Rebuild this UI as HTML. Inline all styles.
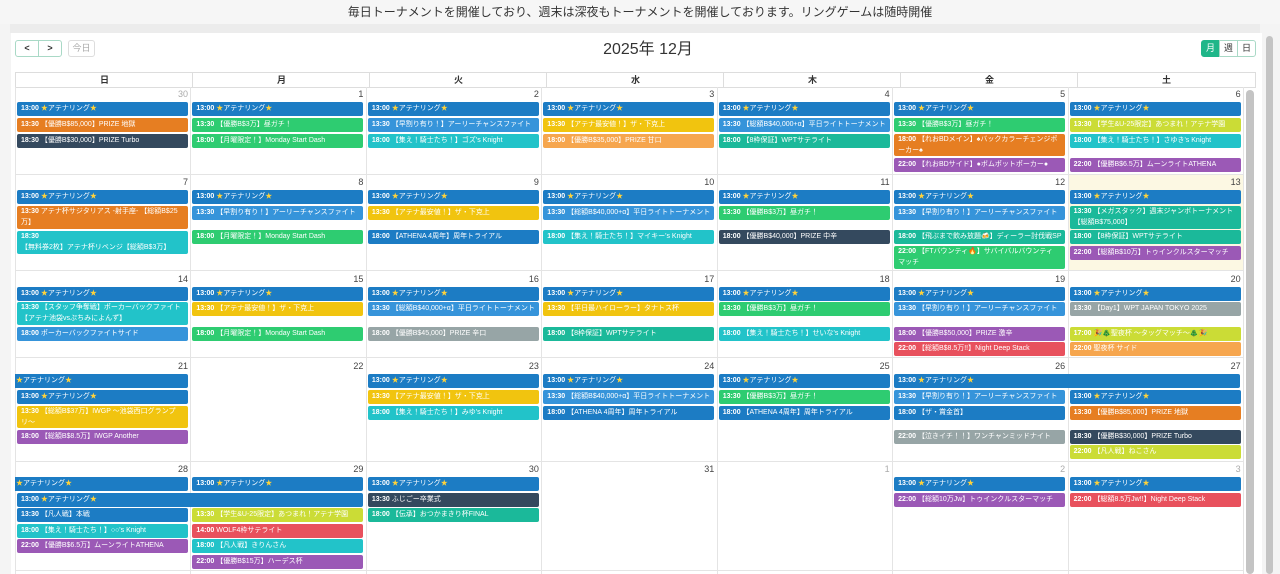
<!DOCTYPE html>
<html><head><meta charset="utf-8">
<style>
*{margin:0;padding:0;box-sizing:border-box}
body{width:1280px;height:574px;overflow:hidden;background:#f4f4f4;font-family:"Liberation Sans","Noto Sans CJK JP",sans-serif;position:relative;color:#333}
.top{position:absolute;left:0;top:0;width:1280px;height:24px;text-align:center;font-size:12px;line-height:24px;color:#333;background:#f6f6f6}
.band{position:absolute;left:10px;top:24px;width:1250px;height:9px;background:#ececec}
.wrap{position:absolute;left:11px;top:33px;width:1251px;height:541px;background:#fff}
.btn{position:absolute;top:40px;height:17px;border:1px solid #a9d9c6;border-radius:3px;background:#fff;font-size:9px;text-align:center;line-height:15px;color:#333}
.title{position:absolute;left:548px;top:39px;width:200px;text-align:center;font-size:16px;line-height:22px;color:#333}
.hd{position:absolute;top:72px;height:16px;border:1px solid #ddd;border-right:none;font-size:9px;font-weight:bold;text-align:center;line-height:14px}
.vl{position:absolute;top:87px;width:1px;height:487px;background:#e4e4e4}
.hl{position:absolute;left:15px;width:1228px;height:1px;background:#e4e4e4}
.dn{position:absolute;width:171px;text-align:right;font-size:9px;line-height:12px;color:#444}
.dn.g{color:#aaa}
.e{position:absolute;width:171px;height:14px;border-radius:2px;color:#fff;font-size:7px;line-height:14px;padding-left:4px;white-space:nowrap;overflow:hidden}
.e.t{height:23px;line-height:10.5px;white-space:normal;padding-top:1px;padding-right:6px}
.e b{font-weight:bold}
.s{color:#ffd23a}
.c0{left:17px}.c1{left:192.4px}.c2{left:367.9px}.c3{left:543.3px}.c4{left:718.7px}.c5{left:894.1px}.c6{left:1069.6px}
.B{background:#1c7cc4}.L{background:#3694da}.O{background:#e67e22}.N{background:#34495e}.G{background:#2ecc71}.C{background:#22c3c9}.Y{background:#f1c40f}.LO{background:#f6a64e}.T{background:#1bb99a}.P{background:#9b59b6}.LI{background:#cbdc36}.GR{background:#97a5a6}.R{background:#e8515d}
.sb{position:absolute;width:7px;border-radius:4px;background:#c4c4c4}
</style></head><body>
<div class="top">毎日トーナメントを開催しており、週末は深夜もトーナメントを開催しております。リングゲームは随時開催</div>
<div class="band"></div>
<div class="wrap"></div>
<div class="btn" style="left:15px;width:24px;font-weight:bold;border-radius:3px 0 0 3px">&lt;</div>
<div class="btn" style="left:38px;width:24px;font-weight:bold;border-radius:0 3px 3px 0">&gt;</div>
<div class="btn" style="left:68px;width:27px;color:#aaa;border-color:#ddd">今日</div>
<div class="title">2025年 12月</div>
<div class="btn" style="left:1201px;width:19px;background:#1fb689;border-color:#1fb689;color:#fff;border-radius:3px 0 0 3px">月</div>
<div class="btn" style="left:1219px;width:19px;border-radius:0">週</div>
<div class="btn" style="left:1237px;width:19px;border-radius:0 3px 3px 0">日</div>
<div class="sb" style="left:1266px;top:36px;height:538px"></div>
<div class="sb" style="left:1246px;top:90px;height:484px;width:8px"></div>

<div class="hd" style="left:15px;width:178px">日</div>
<div class="hd" style="left:192px;width:178px">月</div>
<div class="hd" style="left:369px;width:178px">火</div>
<div class="hd" style="left:546px;width:178px">水</div>
<div class="hd" style="left:723px;width:178px">木</div>
<div class="hd" style="left:900px;width:178px">金</div>
<div class="hd" style="left:1077px;width:179px;border-right:1px solid #ddd">土</div>

<div style="position:absolute;left:1068px;top:175px;width:175px;height:95px;background:#fcf8e3"></div>

<div class="vl" style="left:15px"></div><div class="vl" style="left:190px"></div><div class="vl" style="left:366px"></div><div class="vl" style="left:541px"></div><div class="vl" style="left:717px"></div><div class="vl" style="left:892px"></div><div class="vl" style="left:1068px"></div><div class="vl" style="left:1243px"></div>
<div class="hl" style="top:174px"></div><div class="hl" style="top:270px"></div><div class="hl" style="top:357px"></div><div class="hl" style="top:461px"></div><div class="hl" style="top:570px"></div>

<div class="dn g c0" style="top:88px">30</div><div class="dn c1" style="top:88px">1</div><div class="dn c2" style="top:88px">2</div><div class="dn c3" style="top:88px">3</div><div class="dn c4" style="top:88px">4</div><div class="dn c5" style="top:88px">5</div><div class="dn c6" style="top:88px">6</div>
<div class="dn c0" style="top:176px">7</div><div class="dn c1" style="top:176px">8</div><div class="dn c2" style="top:176px">9</div><div class="dn c3" style="top:176px">10</div><div class="dn c4" style="top:176px">11</div><div class="dn c5" style="top:176px">12</div><div class="dn c6" style="top:176px">13</div>
<div class="dn c0" style="top:273px">14</div><div class="dn c1" style="top:273px">15</div><div class="dn c2" style="top:273px">16</div><div class="dn c3" style="top:273px">17</div><div class="dn c4" style="top:273px">18</div><div class="dn c5" style="top:273px">19</div><div class="dn c6" style="top:273px">20</div>
<div class="dn c0" style="top:360px">21</div><div class="dn c1" style="top:360px">22</div><div class="dn c2" style="top:360px">23</div><div class="dn c3" style="top:360px">24</div><div class="dn c4" style="top:360px">25</div><div class="dn c5" style="top:360px">26</div><div class="dn c6" style="top:360px">27</div>
<div class="dn c0" style="top:463px">28</div><div class="dn c1" style="top:463px">29</div><div class="dn c2" style="top:463px">30</div><div class="dn c3" style="top:463px">31</div><div class="dn g c4" style="top:463px">1</div><div class="dn g c5" style="top:463px">2</div><div class="dn g c6" style="top:463px">3</div>

<!-- Row 1 -->
<div class="e B c0" style="top:102px"><b>13:00</b> <span class="s">★</span>アテナリング<span class="s">★</span></div>
<div class="e O c0" style="top:118px"><b>13:30</b> 【優勝B$85,000】PRIZE 地獄</div>
<div class="e N c0" style="top:134px"><b>18:30</b> 【優勝B$30,000】PRIZE Turbo</div>
<div class="e B c1" style="top:102px"><b>13:00</b> <span class="s">★</span>アテナリング<span class="s">★</span></div>
<div class="e G c1" style="top:118px"><b>13:30</b> 【優勝B$3万】昼ガチ！</div>
<div class="e G c1" style="top:134px"><b>18:00</b> 【月曜限定！】Monday Start Dash</div>
<div class="e B c2" style="top:102px"><b>13:00</b> <span class="s">★</span>アテナリング<span class="s">★</span></div>
<div class="e L c2" style="top:118px"><b>13:30</b> 【早割り有り！】アーリーチャンスファイト</div>
<div class="e C c2" style="top:134px"><b>18:00</b> 【集え！騎士たち！】ゴズ's Knight</div>
<div class="e B c3" style="top:102px"><b>13:00</b> <span class="s">★</span>アテナリング<span class="s">★</span></div>
<div class="e Y c3" style="top:118px"><b>13:30</b> 【アテナ最安値！】ザ・下克上</div>
<div class="e LO c3" style="top:134px"><b>18:00</b> 【優勝B$35,000】PRIZE 甘口</div>
<div class="e B c4" style="top:102px"><b>13:00</b> <span class="s">★</span>アテナリング<span class="s">★</span></div>
<div class="e L c4" style="top:118px"><b>13:30</b> 【総額B$40,000+α】平日ライトトーナメント</div>
<div class="e T c4" style="top:134px"><b>18:00</b> 【8枠保証】WPTサテライト</div>
<div class="e B c5" style="top:102px"><b>13:00</b> <span class="s">★</span>アテナリング<span class="s">★</span></div>
<div class="e G c5" style="top:118px"><b>13:30</b> 【優勝B$3万】昼ガチ！</div>
<div class="e t O c5" style="top:134px;height:22px"><b>18:00</b> 【れおBDメイン】♠バックカラーチェンジポーカー♠</div>
<div class="e P c5" style="top:158px"><b>22:00</b> 【れおBDサイド】●ボムポットポーカー●</div>
<div class="e B c6" style="top:102px"><b>13:00</b> <span class="s">★</span>アテナリング<span class="s">★</span></div>
<div class="e LI c6" style="top:118px"><b>13:30</b> 【学生&amp;U-25限定】あつまれ！アテナ学園</div>
<div class="e C c6" style="top:134px"><b>18:00</b> 【集え！騎士たち！】さゆき's Knight</div>
<div class="e P c6" style="top:158px"><b>22:00</b> 【優勝B$6.5万】ムーンライトATHENA</div>

<!-- Row 2 -->
<div class="e B c0" style="top:190px"><b>13:00</b> <span class="s">★</span>アテナリング<span class="s">★</span></div>
<div class="e t O c0" style="top:206px"><b>13:30</b> アテナ杯サジタリアス -射手座- 【総額B$25万】</div>
<div class="e t C c0" style="top:231px"><b>18:30</b><br>【無料券2枚】アテナ杯リベンジ【総額B$3万】</div>
<div class="e B c1" style="top:190px"><b>13:00</b> <span class="s">★</span>アテナリング<span class="s">★</span></div>
<div class="e L c1" style="top:206px"><b>13:30</b> 【早割り有り！】アーリーチャンスファイト</div>
<div class="e G c1" style="top:230px"><b>18:00</b> 【月曜限定！】Monday Start Dash</div>
<div class="e B c2" style="top:190px"><b>13:00</b> <span class="s">★</span>アテナリング<span class="s">★</span></div>
<div class="e Y c2" style="top:206px"><b>13:30</b> 【アテナ最安値！】ザ・下克上</div>
<div class="e B c2" style="top:230px"><b>18:00</b> 【ATHENA 4周年】周年トライアル</div>
<div class="e B c3" style="top:190px"><b>13:00</b> <span class="s">★</span>アテナリング<span class="s">★</span></div>
<div class="e L c3" style="top:206px"><b>13:30</b> 【総額B$40,000+α】平日ライトトーナメント</div>
<div class="e C c3" style="top:230px"><b>18:00</b> 【集え！騎士たち！】マイキー's Knight</div>
<div class="e B c4" style="top:190px"><b>13:00</b> <span class="s">★</span>アテナリング<span class="s">★</span></div>
<div class="e G c4" style="top:206px"><b>13:30</b> 【優勝B$3万】昼ガチ！</div>
<div class="e N c4" style="top:230px"><b>18:00</b> 【優勝B$40,000】PRIZE 中辛</div>
<div class="e B c5" style="top:190px"><b>13:00</b> <span class="s">★</span>アテナリング<span class="s">★</span></div>
<div class="e L c5" style="top:206px"><b>13:30</b> 【早割り有り！】アーリーチャンスファイト</div>
<div class="e T c5" style="top:230px"><b>18:00</b> 【飛ぶまで飲み放題🍻】ディーラー討伐戦SP</div>
<div class="e t G c5" style="top:246px"><b>22:00</b> 【FTバウンティ🔥】サバイバルバウンティマッチ</div>
<div class="e B c6" style="top:190px"><b>13:00</b> <span class="s">★</span>アテナリング<span class="s">★</span></div>
<div class="e t T c6" style="top:206px"><b>13:30</b> 【メガスタック】週末ジャンボトーナメント【総額B$75,000】</div>
<div class="e T c6" style="top:230px"><b>18:00</b> 【8枠保証】WPTサテライト</div>
<div class="e P c6" style="top:246px"><b>22:00</b> 【総額B$10万】トゥインクルスターマッチ</div>

<!-- Row 3 -->
<div class="e B c0" style="top:287px"><b>13:00</b> <span class="s">★</span>アテナリング<span class="s">★</span></div>
<div class="e t C c0" style="top:302px"><b>13:30</b> 【スタッフ争奪戦】ポーカーバックファイト【アテナ池袋vsぷちみによんず】</div>
<div class="e L c0" style="top:327px"><b>18:00</b> ポーカーバックファイトサイド</div>
<div class="e B c1" style="top:287px"><b>13:00</b> <span class="s">★</span>アテナリング<span class="s">★</span></div>
<div class="e Y c1" style="top:302px"><b>13:30</b> 【アテナ最安値！】ザ・下克上</div>
<div class="e G c1" style="top:327px"><b>18:00</b> 【月曜限定！】Monday Start Dash</div>
<div class="e B c2" style="top:287px"><b>13:00</b> <span class="s">★</span>アテナリング<span class="s">★</span></div>
<div class="e L c2" style="top:302px"><b>13:30</b> 【総額B$40,000+α】平日ライトトーナメント</div>
<div class="e GR c2" style="top:327px"><b>18:00</b> 【優勝B$45,000】PRIZE 辛口</div>
<div class="e B c3" style="top:287px"><b>13:00</b> <span class="s">★</span>アテナリング<span class="s">★</span></div>
<div class="e Y c3" style="top:302px"><b>13:30</b> 【平日最ハイローラー】タナトス杯</div>
<div class="e T c3" style="top:327px"><b>18:00</b> 【8枠保証】WPTサテライト</div>
<div class="e B c4" style="top:287px"><b>13:00</b> <span class="s">★</span>アテナリング<span class="s">★</span></div>
<div class="e G c4" style="top:302px"><b>13:30</b> 【優勝B$3万】昼ガチ！</div>
<div class="e C c4" style="top:327px"><b>18:00</b> 【集え！騎士たち！】せいな's Knight</div>
<div class="e B c5" style="top:287px"><b>13:00</b> <span class="s">★</span>アテナリング<span class="s">★</span></div>
<div class="e L c5" style="top:302px"><b>13:30</b> 【早割り有り！】アーリーチャンスファイト</div>
<div class="e P c5" style="top:327px"><b>18:00</b> 【優勝B$50,000】PRIZE 激辛</div>
<div class="e R c5" style="top:342px"><b>22:00</b> 【総額B$8.5万!!】Night Deep Stack</div>
<div class="e B c6" style="top:287px"><b>13:00</b> <span class="s">★</span>アテナリング<span class="s">★</span></div>
<div class="e GR c6" style="top:302px"><b>13:30</b> 【Day1】WPT JAPAN TOKYO 2025</div>
<div class="e LI c6" style="top:327px"><b>17:00</b> 🎉🎄聖夜杯 ～タッグマッチ～🎄🎉</div>
<div class="e LO c6" style="top:342px"><b>22:00</b> 聖夜杯 サイド</div>

<!-- Row 4 -->
<div class="e B" style="left:15px;width:173px;top:374px;padding-left:1px;border-radius:0 2px 2px 0"><span class="s">★</span>アテナリング<span class="s">★</span></div>
<div class="e B c0" style="top:390px"><b>13:00</b> <span class="s">★</span>アテナリング<span class="s">★</span></div>
<div class="e t Y c0" style="top:406px;height:22px"><b>13:30</b> 【総額B$37万】IWGP ～池袋西口グランプリ～</div>
<div class="e P c0" style="top:430px"><b>18:00</b> 【総額B$8.5万】IWGP Another</div>
<div class="e B c2" style="top:374px"><b>13:00</b> <span class="s">★</span>アテナリング<span class="s">★</span></div>
<div class="e Y c2" style="top:390px"><b>13:30</b> 【アテナ最安値！】ザ・下克上</div>
<div class="e C c2" style="top:406px"><b>18:00</b> 【集え！騎士たち！】みゆ's Knight</div>
<div class="e B c3" style="top:374px"><b>13:00</b> <span class="s">★</span>アテナリング<span class="s">★</span></div>
<div class="e L c3" style="top:390px"><b>13:30</b> 【総額B$40,000+α】平日ライトトーナメント</div>
<div class="e B c3" style="top:406px"><b>18:00</b> 【ATHENA 4周年】周年トライアル</div>
<div class="e B c4" style="top:374px"><b>13:00</b> <span class="s">★</span>アテナリング<span class="s">★</span></div>
<div class="e G c4" style="top:390px"><b>13:30</b> 【優勝B$3万】昼ガチ！</div>
<div class="e B c4" style="top:406px"><b>18:00</b> 【ATHENA 4周年】周年トライアル</div>
<div class="e B c5" style="top:374px;width:346px"><b>13:00</b> <span class="s">★</span>アテナリング<span class="s">★</span></div>
<div class="e L c5" style="top:390px"><b>13:30</b> 【早割り有り！】アーリーチャンスファイト</div>
<div class="e B c5" style="top:406px"><b>18:00</b> 【ザ・賞金首】</div>
<div class="e GR c5" style="top:430px"><b>22:00</b> 【泣きイチ！！】ワンチャンミッドナイト</div>
<div class="e B c6" style="top:390px"><b>13:00</b> <span class="s">★</span>アテナリング<span class="s">★</span></div>
<div class="e O c6" style="top:406px"><b>13:30</b> 【優勝B$85,000】PRIZE 地獄</div>
<div class="e N c6" style="top:430px"><b>18:30</b> 【優勝B$30,000】PRIZE Turbo</div>
<div class="e LI c6" style="top:445px"><b>22:00</b> 【凡人戦】ねこさん</div>

<!-- Row 5 -->
<div class="e B" style="left:15px;width:173px;top:477px;padding-left:1px;border-radius:0 2px 2px 0"><span class="s">★</span>アテナリング<span class="s">★</span></div>
<div class="e B c0" style="top:493px;width:346px"><b>13:00</b> <span class="s">★</span>アテナリング<span class="s">★</span></div>
<div class="e B c0" style="top:508px"><b>13:30</b> 【凡人戦】本戦</div>
<div class="e C c0" style="top:524px"><b>18:00</b> 【集え！騎士たち！】○○'s Knight</div>
<div class="e P c0" style="top:539px"><b>22:00</b> 【優勝B$6.5万】ムーンライトATHENA</div>
<div class="e B c1" style="top:477px"><b>13:00</b> <span class="s">★</span>アテナリング<span class="s">★</span></div>
<div class="e LI c1" style="top:508px"><b>13:30</b> 【学生&amp;U-25限定】あつまれ！アテナ学園</div>
<div class="e R c1" style="top:524px"><b>14:00</b> WOLF4枠サテライト</div>
<div class="e C c1" style="top:539px"><b>18:00</b> 【凡人戦】きりんさん</div>
<div class="e P c1" style="top:555px"><b>22:00</b> 【優勝B$15万】ハーデス杯</div>
<div class="e B c2" style="top:477px"><b>13:00</b> <span class="s">★</span>アテナリング<span class="s">★</span></div>
<div class="e N c2" style="top:493px"><b>13:30</b> ふじごー卒業式</div>
<div class="e T c2" style="top:508px"><b>18:00</b> 【伝承】おつかまきり杯FINAL</div>
<div class="e B c5" style="top:477px"><b>13:00</b> <span class="s">★</span>アテナリング<span class="s">★</span></div>
<div class="e P c5" style="top:493px"><b>22:00</b> 【総額10万Jw】トゥインクルスターマッチ</div>
<div class="e B c6" style="top:477px"><b>13:00</b> <span class="s">★</span>アテナリング<span class="s">★</span></div>
<div class="e R c6" style="top:493px"><b>22:00</b> 【総額8.5万Jw!!】Night Deep Stack</div>
</body></html>
